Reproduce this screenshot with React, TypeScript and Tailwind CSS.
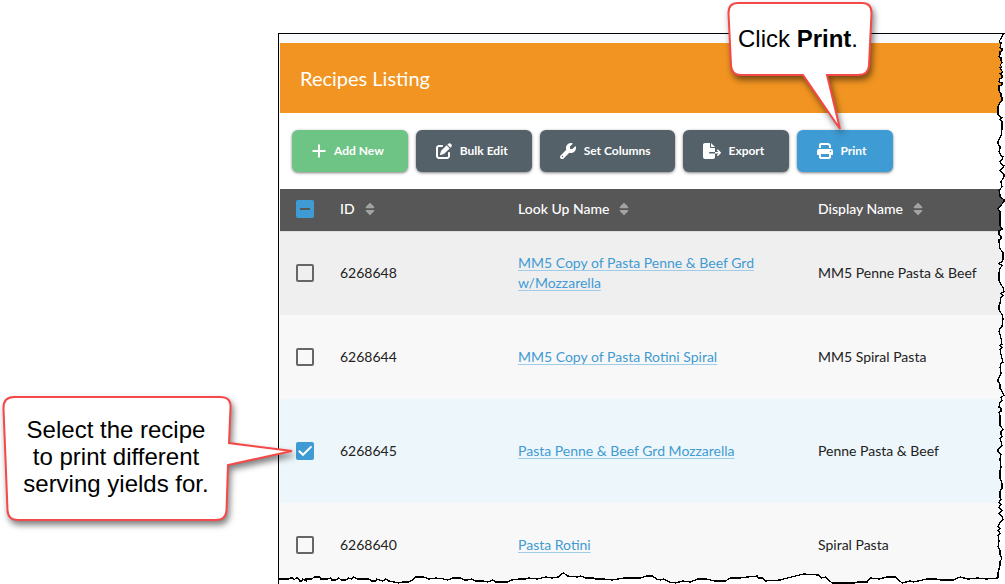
import { useEffect, useRef } from "react"
import type { ReactNode } from "react"
import { FaFileExport, FaPenToSquare, FaPrint, FaSort, FaWrench } from "react-icons/fa6"

interface Recipe {
    id: string
    lookUpName: string
    displayName: string
    selected?: boolean
    rowClass: string
}

const recipes: Recipe[] = [
    {
        id: "6268648",
        lookUpName: "MM5 Copy of Pasta Penne & Beef Grd w/Mozzarella",
        displayName: "MM5 Penne Pasta & Beef",
        rowClass: "h-[84px] bg-[#efefef]",
    },
    {
        id: "6268644",
        lookUpName: "MM5 Copy of Pasta Rotini Spiral",
        displayName: "MM5 Spiral Pasta",
        rowClass: "h-[84px] bg-[#f8f8f8]",
    },
    {
        id: "6268645",
        lookUpName: "Pasta Penne & Beef Grd Mozzarella",
        displayName: "Penne Pasta & Beef",
        selected: true,
        rowClass: "h-[104px] bg-[#edf6fa]",
    },
    {
        id: "6268640",
        lookUpName: "Pasta Rotini",
        displayName: "Spiral Pasta",
        rowClass: "h-[84px] bg-[#f8f8f8]",
    },
]

const rightEdge =
    "13,0 12,3 10,6 9,8 11,9 10,14 12,15 12,17 10,18 10,21 9,23 11,24 11,27 12,29 10,31 12,33 10,34 11,36 13,38 10,40 12,42 12,44 10,45 9,48 12,49 12,51 9,52 9,57 11,60 11,63 12,64 12,67 10,69 8,73 8,81 10,83 12,84 10,86 12,88 12,95 11,102 8,108 8,110 10,113 10,115 9,118 11,122 13,123 12,126 10,128 11,130 14,132 12,135 10,137 14,141 14,143 11,148 12,153 9,157 10,161 10,163 14,166 14,168 8,175 10,178 10,192 12,195 12,196 9,197 9,201 11,203 11,205 9,206 9,208 10,215 13,219 13,226 12,228 9,230 12,232 10,235 9,239 9,247 11,251 13,254 14,258 11,260 13,262 11,264 10,270 9,272 9,276 10,278 12,281 13,285 12,293 10,295 9,298 10,301 11,305 12,311 10,312 12,314 10,316 11,321 12,325 13,329 11,330 10,334 11,340 8,346 8,348 10,351 10,355 12,358 14,362 11,364 12,367 10,369 9,374 11,375 11,378 9,379 10,382 10,392 13,396 11,398 11,401 12,403 10,405 12,412 8,416 8,418 11,421 10,426 11,434 10,438 10,445 12,450 12,455 10,458 10,464 11,466 9,469 11,471 9,474 12,477 9,480 12,483 13,486 10,489 8,493 10,495 8,497 10,500 8,502 9,508 8,514 10,517 10,521 12,526 10,528 10,532 8,540 8,545"

const bottomEdge =
    "0,9 10,9 11,8 14,8 15,10 17,8 19,8 21,11 23,11 24,9 27,11 27,9 33,9 35,7 41,7 42,9 48,9 52,8 53,10 57,10 60,8 62,10 67,10 70,8 73,9 75,7 79,9 90,9 93,11 97,11 98,9 104,11 107,9 110,11 120,13 124,12 130,12 134,10 137,7 145,7 150,9 157,8 165,9 169,10 174,8 182,8 186,10 189,10 193,9 197,11 204,11 209,12 214,10 217,12 229,12 233,10 240,9 247,9 250,8 259,9 267,7 273,8 280,7 283,4 285,3 289,6 299,7 302,6 307,8 315,8 317,9 325,9 334,10 345,8 362,8 368,6 374,6 378,9 382,10 385,9 391,12 397,13 404,11 412,12 419,9 428,9 436,11 447,11 452,8 462,8 469,7 479,6 480,8 484,8 487,11 502,10 509,8 517,6 525,4 540,5 543,8 547,7 554,13 576,13 580,12 589,12 592,8 601,9 609,7 617,7 624,13 632,11 635,12 649,9 658,9 663,10 675,10 682,7 690,9 700,8 708,9 720,8"

function TornEdges() {
    return (
        <>
            <svg
                className="absolute top-0 right-0 h-full w-[15px]"
                viewBox="0 0 15 551"
                preserveAspectRatio="none"
                shapeRendering="crispEdges"
                aria-hidden="true"
            >
                <polygon points={`15,0 ${rightEdge} 8,551 15,551`} fill="#fff" />
                <polyline points={rightEdge} fill="none" stroke="#000" strokeWidth="1.3" />
            </svg>
            <svg
                className="absolute bottom-0 left-0 h-[14px] w-full"
                viewBox="0 0 727 14"
                preserveAspectRatio="none"
                shapeRendering="crispEdges"
                aria-hidden="true"
            >
                <polygon points={`0,14 ${bottomEdge} 727,8 727,14`} fill="#fff" />
                <polyline points={bottomEdge} fill="none" stroke="#000" strokeWidth="1.3" />
            </svg>
        </>
    )
}

function PlusIcon() {
    return (
        <svg className="size-[14px]" viewBox="0 0 14 14" fill="none" stroke="currentColor" strokeWidth="2" aria-hidden="true">
            <path d="M7 .5v13M.5 7h13" />
        </svg>
    )
}

interface ToolbarButtonProps {
    icon: ReactNode
    label: string
    className: string
}

function ToolbarButton({ icon, label, className }: ToolbarButtonProps) {
    return (
        <button
            type="button"
            className={`flex h-[42px] items-center gap-2 rounded-md pr-6 pl-5 text-xs font-bold text-white shadow-[0_1px_3px_rgba(0,0,0,0.5)] ${className}`}
        >
            {icon}
            {label}
        </button>
    )
}

interface CheckboxProps {
    label: string
    checked?: boolean
    indeterminate?: boolean
}

function Checkbox({ label, checked = false, indeterminate = false }: CheckboxProps) {
    const ref = useRef<HTMLInputElement>(null)

    useEffect(() => {
        if (ref.current) ref.current.indeterminate = indeterminate
    }, [indeterminate])

    return (
        <label className="grid size-[18px] place-items-center">
            <input
                ref={ref}
                type="checkbox"
                aria-label={label}
                defaultChecked={checked}
                className="peer col-start-1 row-start-1 size-[18px] appearance-none rounded-xs border-2 border-[#666] checked:border-[#3f9bd3] checked:bg-[#3f9bd3] indeterminate:border-[#3f9bd3] indeterminate:bg-[#3f9bd3]"
            />
            {indeterminate ? (
                <svg className="pointer-events-none z-10 col-start-1 row-start-1 size-[18px]" viewBox="0 0 18 18" aria-hidden="true">
                    <path d="M4 9h10" stroke="#575757" strokeWidth="2" />
                </svg>
            ) : (
                <svg
                    className="pointer-events-none z-10 col-start-1 row-start-1 hidden size-[18px] peer-checked:block"
                    viewBox="0 0 18 18"
                    fill="none"
                    aria-hidden="true"
                >
                    <path d="M2.8 8.8 7 12.8 15.5 4.4" stroke="#fff" strokeWidth="2" />
                </svg>
            )}
        </label>
    )
}

function SortHeader({ label }: { label: string }) {
    return (
        <th scope="col" className="px-0 pt-0 pb-0.5 text-left font-medium">
            <button type="button" className="flex items-center gap-2">
                {label}
                <FaSort className="size-[14px] text-[#a3a3a3]" />
            </button>
        </th>
    )
}

function RecipesListing() {
    return (
        <main className="relative min-w-0 flex-1 overflow-hidden border-t border-l border-black bg-[#f8f9fb] pt-[9px] pl-px font-[Lato,sans-serif]">
            <header className="flex h-[70px] items-center bg-[#f29421] px-5">
                <h1 className="text-xl text-white">Recipes Listing</h1>
            </header>

            <div className="flex h-[76px] items-center gap-2 bg-white px-3">
                <ToolbarButton icon={<PlusIcon />} label="Add New" className="bg-[#6ec485]" />
                <ToolbarButton icon={<FaPenToSquare className="size-4" />} label="Bulk Edit" className="bg-[#546169]" />
                <ToolbarButton icon={<FaWrench className="size-4" />} label="Set Columns" className="bg-[#546169]" />
                <ToolbarButton icon={<FaFileExport className="size-[18px]" />} label="Export" className="min-w-[106px] bg-[#546169]" />
                <ToolbarButton icon={<FaPrint className="size-4" />} label="Print" className="min-w-24 bg-[#3f9bd3]" />
            </div>

            <table className="w-full table-fixed border-collapse text-sm leading-5 text-[#222]">
                <colgroup>
                    <col className="w-[60px]" />
                    <col className="w-[178px]" />
                    <col className="w-[300px]" />
                    <col />
                </colgroup>
                <thead>
                    <tr className="h-[42px] border-b border-[#dedede] bg-[#575757] text-white">
                        <th scope="col" className="pt-0 pr-0 pb-0.5 pl-4">
                            <Checkbox label="Select all recipes" indeterminate />
                        </th>
                        <SortHeader label="ID" />
                        <SortHeader label="Look Up Name" />
                        <SortHeader label="Display Name" />
                    </tr>
                </thead>
                <tbody>
                    {recipes.map((recipe) => (
                        <tr key={recipe.id} className={recipe.rowClass}>
                            <td className="py-0 pr-0 pl-4">
                                <Checkbox label={`Select recipe ${recipe.id}`} checked={recipe.selected} />
                            </td>
                            <td className="p-0">{recipe.id}</td>
                            <td className="py-0 pr-10 pl-0">
                                <a href="#" className="text-[#3f9bd3] underline decoration-[#9fcde9] underline-offset-2">
                                    {recipe.lookUpName}
                                </a>
                            </td>
                            <td className="p-0">{recipe.displayName}</td>
                        </tr>
                    ))}
                </tbody>
            </table>

            <TornEdges />
        </main>
    )
}

function PrintCallout() {
    return (
        <aside className="absolute top-0 left-[724px] h-[140px] w-[156px]">
            <svg className="absolute inset-0 size-full overflow-visible drop-shadow-[2px_4px_3px_rgba(0,0,0,0.5)]" viewBox="0 0 156 140" aria-hidden="true">
                <path
                    d="M14 3H138Q147.500 3 147.500 13L145 65Q144.500 75 134 75H103L116 129 79 75H17Q7.500 75 7 65L4.500 13Q4.500 3 14 3Z"
                    fill="#fff"
                    stroke="#f54848"
                    strokeWidth="2"
                />
            </svg>
            <p className="relative pt-[25px] pr-2 text-center text-2xl leading-[27px]">
                Click <strong>Print</strong>.
            </p>
        </aside>
    )
}

function SelectCallout() {
    return (
        <aside className="absolute top-[392px] left-0 h-[136px] w-[296px]">
            <svg className="absolute inset-0 size-full overflow-visible drop-shadow-[2px_4px_3px_rgba(0,0,0,0.5)]" viewBox="0 0 296 136" aria-hidden="true">
                <path
                    d="M14 5H220Q231 5 230.500 15L229 51 292 59 228 73 226.500 118Q226 128 216 128H18Q8 128 7.500 118L3.500 16Q3.500 5 14 5Z"
                    fill="#fff"
                    stroke="#f54848"
                    strokeWidth="2"
                />
            </svg>
            <p className="relative w-[232px] pt-[24px] text-center text-2xl leading-[27px]">
                Select the recipe
                <br />
                to print different
                <br />
                serving yields for.
            </p>
        </aside>
    )
}

export default function App() {
    return (
        <div className="relative flex h-screen overflow-hidden bg-white pt-[33px] pl-[278px] font-['Liberation_Sans',Arial,sans-serif] text-black">
            <RecipesListing />
            <PrintCallout />
            <SelectCallout />
        </div>
    )
}
